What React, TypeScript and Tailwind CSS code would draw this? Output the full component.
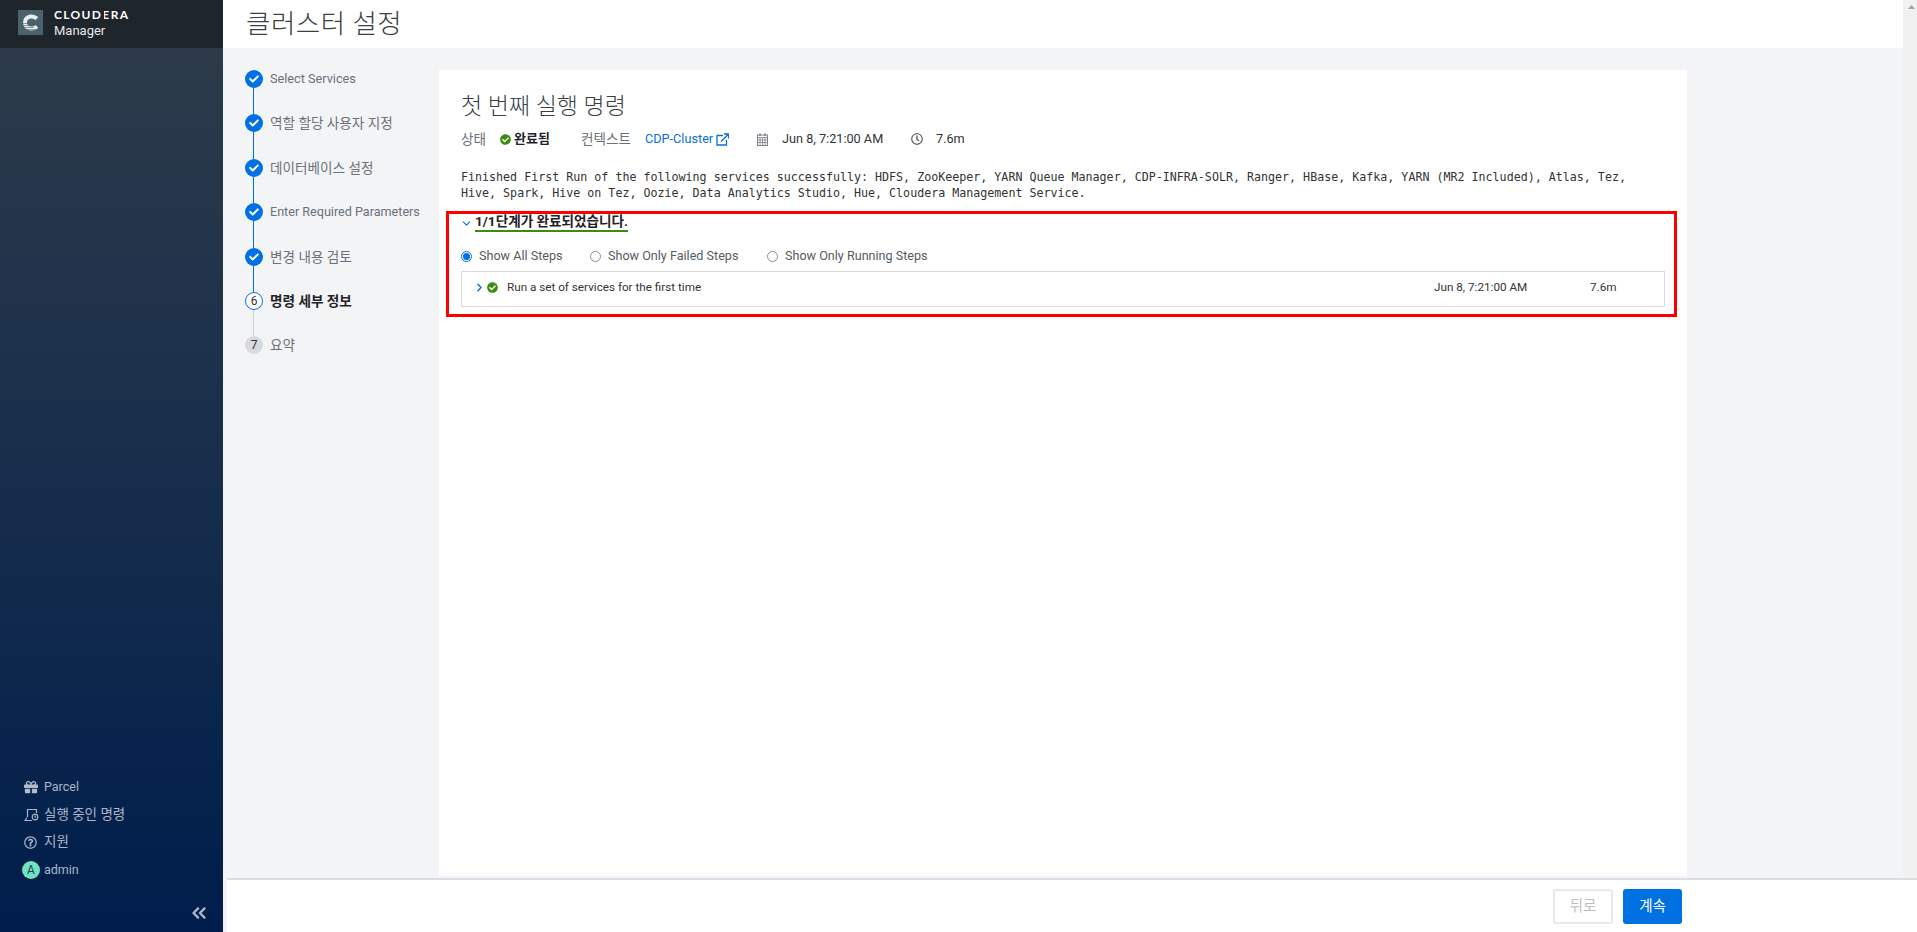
import { ChevronDown, ChevronRight, ChevronsLeft } from "lucide-react";
import { FaCheck, FaCheckCircle, FaGift, FaRegClock, FaRegQuestionCircle } from "react-icons/fa";

const sans = "font-['Roboto','Noto_Sans_CJK_KR',sans-serif]";

const steps = [
  { label: "Select Services", state: "done", size: "text-[12.700px]" },
  { label: "역할 할당 사용자 지정", state: "done", size: "text-[13.600px]" },
  { label: "데이터베이스 설정", state: "done", size: "text-[13.600px]" },
  { label: "Enter Required Parameters", state: "done", size: "text-[12.600px]" },
  { label: "변경 내용 검토", state: "done", size: "text-[13.600px]" },
  { label: "명령 세부 정보", state: "current", size: "text-[13.600px]" },
  { label: "요약", state: "todo", size: "text-[13.600px]" },
];

const Logo = () => (
  <svg width="25" height="25" viewBox="0 0 25 25" className="shrink-0">
    <rect width="25" height="25" fill="#4a626c" />
    <path d="M19 8.500Q16 6 12.500 6.500 7 7.500 7 12.500 7 17.500 12.500 18.500 16 19 19 16.500" fill="none" stroke="#e8eef0" strokeWidth="4" />
    <path d="M5 13.500h8M5 15.500h9M6 17.500h10M8 19.500h10" stroke="#4a626c" strokeWidth="0.6" />
  </svg>
);

const CommandsIcon = () => (
  <svg width="15" height="14" viewBox="0 0 15 14" fill="none" stroke="currentColor" strokeWidth="1.2">
    <path d="M3.500 9V1.500h9V5" />
    <path d="M3 9.500L1 12.500h7" />
    <circle cx="11" cy="9" r="2.800" />
    <path d="M11 7.500V9l1 .6" />
  </svg>
);

const CalendarIcon = () => (
  <svg width="11" height="13" viewBox="0 0 11 13" fill="none" stroke="#7d8288" strokeWidth="1">
    <rect x="0.500" y="2" width="10" height="10.500" />
    <path d="M0.500 4.500h10M0.500 7h10M0.500 9.500h10M3 4.500v8M5.500 4.500v8M8 4.500v8" strokeWidth="0.8" />
    <path d="M3 0.500v2.500M8 0.500v2.500" strokeWidth="1.500" />
  </svg>
);

const ExternalIcon = () => (
  <svg width="13" height="13" viewBox="0 0 13 13" fill="none" stroke="#0a6fd8" strokeWidth="1.300">
    <path d="M7 2.500H1v9.500h9.500V7" />
    <path d="M5 8.500l7-7M8 1h4.500v4.500" />
  </svg>
);

const Radio = ({ label, checked, width }: { label: string; checked?: boolean; width: string }) => (
  <label className={`flex items-center gap-[7px] ${width}`}>
    <span className={`w-[11px] h-[11px] rounded-full border flex items-center justify-center ${checked ? "border-[#0071e3]" : "border-[#8a8f94]"}`}>
      {checked && <span className="w-[7px] h-[7px] rounded-full bg-[#0071e3]" />}
    </span>
    <span className="text-[12.600px] text-[#555b61]">{label}</span>
  </label>
);

const SideItem = ({ icon, label, size }: { icon: React.ReactNode; label: string; size: string }) => (
  <div className="flex items-center h-[18px]">
    <span className="w-[22px] ml-[22px] flex justify-start">{icon}</span>
    <span className={size}>{label}</span>
  </div>
);

const App = () => {
  return (
    <div className={`flex h-[932px] w-[1917px] overflow-hidden bg-[#f3f4f6] ${sans}`}>

      {/* Sidebar */}
      <aside className="w-[223px] shrink-0 flex flex-col bg-gradient-to-b from-[#2f3c49] to-[#001d4c] text-[#a8b7c9]">
        <div className="h-12 bg-[#1e252b] flex items-center pl-[18px] pb-[3px] gap-[11px]">
          <Logo />
          <div className="text-white leading-none">
            <div className="font-['Lato',sans-serif] font-bold text-[12px] tracking-[1.350px]">
              CLOUD
              <span className="relative after:absolute after:left-0 after:top-0 after:bottom-0 after:w-[2px] after:bg-[#1e252b]">E</span>
              RA
            </div>
            <div className="text-[13px] mt-[3px] text-[#e5e7eb]">Manager</div>
          </div>
        </div>
        <div className="mt-auto flex flex-col gap-[9.670px] mb-[9px]">
          <SideItem size="text-[12.500px]" icon={<FaGift size={14} className="ml-[2px] text-[#b3bcc8]" />} label="Parcel" />
          <SideItem size="text-[13.500px] leading-[16px] pb-[2px]" icon={<span className="ml-[2px]"><CommandsIcon /></span>} label="실행 중인 명령" />
          <SideItem size="text-[13.500px] leading-[16px] pb-[2px]" icon={<FaRegQuestionCircle size={13} className="ml-[2px]" />} label="지원" />
          <div className="flex items-center h-[18px] pl-[22px] gap-1">
            <span className="w-[18px] h-[18px] rounded-full bg-[#6fe3bd] text-[#27415c] flex items-center justify-center text-[12px]">A</span>
            <span className="text-[12.500px]">admin</span>
          </div>
        </div>
        <div className="flex justify-end pr-[13px] pb-[8px] pt-[14px]">
          <ChevronsLeft size={22} strokeWidth={2.600} />
        </div>
      </aside>

      <div className="flex-1 flex flex-col min-w-0">
        <div className="flex-1 flex min-h-0">
          <div className="flex-1 flex flex-col min-w-0">

            {/* Header */}
            <header className="h-12 bg-white pl-[23px] flex items-center shrink-0">
              <h1 className="text-[26.500px] font-light text-[#3a3f44] tracking-[0.5px]">클러스터 설정</h1>
            </header>

            <div className="flex-1 flex min-h-0 pb-[2px]">

              {/* Steps */}
              <nav className="w-[216px] shrink-0 pl-[22px] pt-[22px]">
                {steps.map((s, i) => (
                  <div key={s.label} className="flex gap-[7px] h-[44.400px]">
                    <div className="flex flex-col items-center w-[18px]">
                      {s.state === "done" && (
                        <span className="w-[18px] h-[18px] shrink-0 rounded-full bg-[#0071e3] text-white flex items-center justify-center">
                          <FaCheck size={10} />
                        </span>
                      )}
                      {s.state === "current" && (
                        <span className="w-[18px] h-[18px] shrink-0 rounded-full bg-white border border-[#0071e3] text-[#333] text-[12px] flex items-center justify-center">6</span>
                      )}
                      {s.state === "todo" && (
                        <span className="w-[18px] h-[18px] shrink-0 rounded-full bg-[#d8dadd] text-[#333] text-[12px] flex items-center justify-center">7</span>
                      )}
                      {i < steps.length - 1 && (
                        <span className={`w-[1px] -ml-[1px] flex-1 ${s.state === "done" ? "bg-[#0071e3]" : "bg-[#d0d2d5]"}`} />
                      )}
                    </div>
                    <span className={`${s.size} leading-[18px] ${s.state === "current" ? "font-bold text-[#1f2328]" : "text-[#6b7178]"}`}>
                      {s.label}
                    </span>
                  </div>
                ))}
              </nav>

              {/* Main panel */}
              <main className="w-[1248px] mt-[22px] bg-white pl-[22px] pr-[22px] pt-[22px]">
                <h2 className="text-[23px] font-light text-[#3a3f44] leading-[30px]">첫 번째 실행 명령</h2>

                <div className="flex items-center text-[12.700px] h-[18px] mt-[8px]">
                  <span className="text-[#6b7178] w-[39px] text-[13.600px]">상태</span>
                  <FaCheckCircle size={11} className="text-[#3d8b0f] mr-[3px]" />
                  <span className="font-bold text-[#1f2328] w-[67px] text-[13px]">완료됨</span>
                  <span className="text-[#6b7178] w-[64px] text-[13.600px]">컨텍스트</span>
                  <span className="w-[112px] flex items-center gap-[3px] text-[#0a6fd8]">
                    CDP-Cluster
                    <ExternalIcon />
                  </span>
                  <span className="w-[25px]"><CalendarIcon /></span>
                  <span className="text-[#333] w-[129px]">Jun 8, 7:21:00 AM</span>
                  <span className="w-[25px]"><FaRegClock size={12} className="text-[#555]" /></span>
                  <span className="text-[#333]">7.6m</span>
                </div>

                <p className="font-['DejaVu_Sans_Mono',monospace] text-[11.670px] leading-4 text-[#333] mt-[21px] whitespace-pre-line">
                  {"Finished First Run of the following services successfully: HDFS, ZooKeeper, YARN Queue Manager, CDP-INFRA-SOLR, Ranger, HBase, Kafka, YARN (MR2 Included), Atlas, Tez,\nHive, Spark, Hive on Tez, Oozie, Data Analytics Studio, Hue, Cloudera Management Service."}
                </p>

                {/* Steps result, the red outline is part of the picture */}
                <section className="border-[3px] border-[#ff0000] w-[1231px] h-[106px] -ml-[15px] mt-[10px] pl-3 pr-[9px]">
                  <div className="flex items-center h-[18px]">
                    <ChevronDown size={13} className="text-[#0a6fd8] mr-[2px] -ml-[1px]" />
                    <span className="text-[13.600px] font-bold text-[#1f2328] border-b-2 border-[#3d8b0f] leading-[15px] pb-[1px]">1/1단계가 완료되었습니다.</span>
                  </div>
                  <div className="flex mt-[17px] h-[14px] items-center">
                    <Radio label="Show All Steps" checked width="w-[129px]" />
                    <Radio label="Show Only Failed Steps" width="w-[177px]" />
                    <Radio label="Show Only Running Steps" width="w-[170px]" />
                  </div>
                  <div className="border border-[#d9dadc] h-[36px] mt-[8px] pb-[3px] flex items-center text-[11.700px] text-[#333]">
                    <ChevronRight size={13} strokeWidth={2.500} className="text-[#0a6fd8] ml-[11px] mr-[1px]" />
                    <FaCheckCircle size={11} className="text-[#3d8b0f] mr-[9px]" />
                    <span>Run a set of services for the first time</span>
                    <span className="ml-auto w-[156px]">Jun 8, 7:21:00 AM</span>
                    <span className="w-[74px]">7.6m</span>
                  </div>
                </section>
              </main>
            </div>
          </div>

          {/* Page scrollbar */}
          <div className="w-[14px] bg-[#f1f1f1] pt-[5px] pl-[5px]">
            <svg width="7" height="4" viewBox="0 0 7 4"><path d="M3.500 0L7 4H0z" fill="#a3a3a3" /></svg>
          </div>
        </div>

        {/* Footer */}
        <footer className="h-[54px] ml-[4px] shrink-0 bg-white border-t-2 border-[#dcdce4] flex items-start gap-[10px] pt-[9px] pl-[1326px]">
          <button className="w-[60px] h-[35px] rounded-[3px] border-2 border-[#e8e9ec] text-[#bdbfc3] text-[14.500px]">뒤로</button>
          <button className="w-[59px] h-[35px] rounded-[3px] bg-[#0071e3] text-white text-[14.500px]">계속</button>
        </footer>
      </div>
    </div>
  );
};

export default App;
